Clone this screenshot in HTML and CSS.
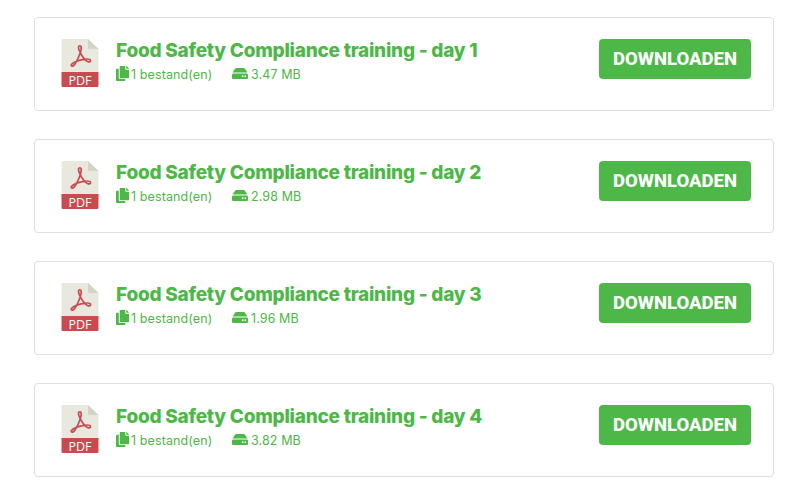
FILE: index.html
```html
<!DOCTYPE html>
<html lang="nl">
<head>
    <meta charset="utf-8">
    <link rel="stylesheet" href="styles.css">
    <title>Downloads</title>
</head>
<body>
    <svg class="sprite">
        <symbol id="pdf" viewBox="0 0 38 48">
            <path fill="#e8e8df" d="M2 0h25l10.500 10v24H.5V1.500A1.500 1.500 0 0 1 2 0z"/>
            <path fill="#d3d3c6" d="M27 0l10.500 10H28.500a1.500 1.500 0 0 1-1.500-1.500z"/>
            <path fill="#c94b50" d="M.5 33h37v13.500a1.500 1.500 0 0 1-1.500 1.500H2A1.500 1.500 0 0 1 .5 46.500z"/>
            <path fill="none" stroke="#c94b50" stroke-width="1.700" stroke-linejoin="round" d="M19 6.800c-2.200 0-1.700 3-.2 5.900 2 4.300 4.600 8.100 7.600 9.700 2.200 1.100 3.400.1 3.100-1.100-.4-1.500-4.300-1.500-8.300-.6-3.500.7-6.500 1.800-8.700 3-2.400 1.500-2.700 2.800-1.800 3.300 1.600.8 3.400-1.600 4.800-4.500 2-4 4.100-8.800 4.600-12.200.3-2.200 0-3.500-1.100-3.500z"/>
            <text class="pdf-label" x="19" y="45.500" text-anchor="middle" textLength="23">PDF</text>
        </symbol>
        <symbol id="copy" viewBox="0 0 448 512">
            <path d="M320 448v40c0 13.255-10.745 24-24 24H24c-13.255 0-24-10.745-24-24V120c0-13.255 10.745-24 24-24h72v296c0 30.879 25.121 56 56 56h168zm0-344V0H152c-13.255 0-24 10.745-24 24v368c0 13.255 10.745 24 24 24h272c13.255 0 24-10.745 24-24V128H344c-13.200 0-24-10.800-24-24zm120.971-31.029L375.029 7.029A24 24 0 0 0 358.059 0H352v96h96v-6.059a24 24 0 0 0-7.029-16.970z"/>
        </symbol>
        <symbol id="hdd" viewBox="0 0 576 512">
            <path d="M576 304v96c0 26.510-21.490 48-48 48H48c-26.510 0-48-21.490-48-48v-96c0-26.510 21.490-48 48-48h480c26.510 0 48 21.490 48 48zm-48-80a79.557 79.557 0 0 1 30.777 6.165L462.250 85.374A48.003 48.003 0 0 0 422.311 64H153.689a48 48 0 0 0-39.938 21.374L17.223 230.165A79.557 79.557 0 0 1 48 224h480zm-48 96c-17.673 0-32 14.327-32 32s14.327 32 32 32 32-14.327 32-32-14.327-32-32-32zm-96 0c-17.673 0-32 14.327-32 32s14.327 32 32 32 32-14.327 32-32-14.327-32-32-32z"/>
        </symbol>
    </svg>

    <div class="downloads">
        <div class="card">
            <svg class="file-icon"><use href="#pdf"/></svg>
            <div class="info">
                <h3>Food Safety Compliance training - day 1</h3>
                <div class="meta">
                    <span class="files"><svg class="copy"><use href="#copy"/></svg>1 bestand(en)</span>
                    <span class="size"><svg class="hdd" viewBox="0 64 576 384" preserveAspectRatio="none"><use href="#hdd" width="576" height="512"/></svg>3.47 MB</span>
                </div>
            </div>
            <a class="btn" href="#">DOWNLOADEN</a>
        </div>
        <div class="card">
            <svg class="file-icon"><use href="#pdf"/></svg>
            <div class="info">
                <h3>Food Safety Compliance training - day 2</h3>
                <div class="meta">
                    <span class="files"><svg class="copy"><use href="#copy"/></svg>1 bestand(en)</span>
                    <span class="size"><svg class="hdd" viewBox="0 64 576 384" preserveAspectRatio="none"><use href="#hdd" width="576" height="512"/></svg>2.98 MB</span>
                </div>
            </div>
            <a class="btn" href="#">DOWNLOADEN</a>
        </div>
        <div class="card">
            <svg class="file-icon"><use href="#pdf"/></svg>
            <div class="info">
                <h3>Food Safety Compliance training - day 3</h3>
                <div class="meta">
                    <span class="files"><svg class="copy"><use href="#copy"/></svg>1 bestand(en)</span>
                    <span class="size"><svg class="hdd" viewBox="0 64 576 384" preserveAspectRatio="none"><use href="#hdd" width="576" height="512"/></svg>1.96 MB</span>
                </div>
            </div>
            <a class="btn" href="#">DOWNLOADEN</a>
        </div>
        <div class="card">
            <svg class="file-icon"><use href="#pdf"/></svg>
            <div class="info">
                <h3>Food Safety Compliance training - day 4</h3>
                <div class="meta">
                    <span class="files"><svg class="copy"><use href="#copy"/></svg>1 bestand(en)</span>
                    <span class="size"><svg class="hdd" viewBox="0 64 576 384" preserveAspectRatio="none"><use href="#hdd" width="576" height="512"/></svg>3.82 MB</span>
                </div>
            </div>
            <a class="btn" href="#">DOWNLOADEN</a>
        </div>
    </div>
</body>
</html>
```
FILE: styles.css
```css
* {
    box-sizing: border-box;
}
body {
    margin: 0;
    background: #fff;
    color: #4db848;
    font-family: Inter, "Open Sans", sans-serif;
}
.sprite {
    display: none;
}
.downloads {
    display: flex;
    flex-direction: column;
    gap: 28px;
    width: 740px;
    margin: 17px 0 0 34px;
}
.card {
    display: flex;
    align-items: flex-start;
    height: 94px;
    padding: 21px 22px 0 26px;
    border: 1px solid #dfdfdf;
    border-radius: 4px;
}
.file-icon {
    width: 38px;
    height: 48px;
    flex: none;
}
.pdf-label {
    font: 12.5px "Open Sans", sans-serif;
    fill: #fff;
}
.info {
    flex: 1;
    padding-left: 17px;
    white-space: nowrap;
}
h3 {
    margin: 0;
    font-size: 19px;
    font-weight: 800;
    line-height: 24px;
    letter-spacing: -0.24px;
}
.meta {
    display: flex;
    font-size: 12.5px;
    line-height: 20px;
    padding-top: 2px;
    letter-spacing: 0.1px;
}
.meta span {
    display: flex;
}
.files {
    width: 116px;
}
.meta svg {
    fill: #4db848;
    flex: none;
}
.copy {
    width: 13px;
    height: 15px;
    margin: 1px 2px 0 0;
}
.hdd {
    width: 16px;
    height: 11px;
    margin: 3px 3px 0 0;
}
.btn {
    width: 152px;
    height: 40px;
    border-radius: 4px;
    background: #4db848;
    color: #fff;
    font-family: Roboto, sans-serif;
    font-size: 18.5px;
    font-weight: 800;
    line-height: 41px;
    text-align: center;
    text-decoration: none;
}
```
